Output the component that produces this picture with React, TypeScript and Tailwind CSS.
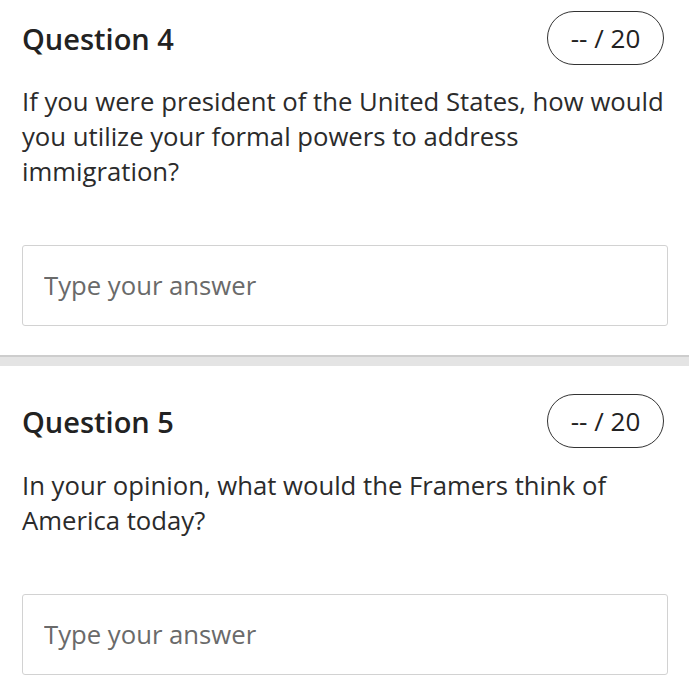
import React from 'react';

type Question = {
	id: number;
	prompt: string;
	points: number;
};

const questions: Question[] = [
	{
		id: 4,
		prompt:
			'If you were president of the United States, how would you utilize your formal powers to address immigration?',
		points: 20,
	},
	{
		id: 5,
		prompt: 'In your opinion, what would the Framers think of America today?',
		points: 20,
	},
];

function QuestionBlock({ q, first }: { q: Question; first: boolean }) {
	return (
		<section
			className={`px-[22px] ${first ? 'pt-[11px] pb-[29px]' : 'pt-[28px] pb-[26px]'}`}
		>
			<div className="flex items-center justify-between h-[54px]">
				<h2 className="text-[29px] font-semibold text-[#222] leading-none">
					Question {q.id}
				</h2>
				<div className="flex items-center justify-center h-[54px] w-[117px] mr-[4px] rounded-full border-[1.5px] border-[#333] text-[26px] text-[#222]">
					-- / {q.points}
				</div>
			</div>
			<p
				className={`${first ? 'mt-[19px]' : 'mt-[20px]'} text-[25.7px] leading-[35px] text-[#2b2b2b]`}
			>
				{q.prompt}
			</p>
			<input
				type="text"
				placeholder="Type your answer"
				className="mt-[56px] block w-full h-[81px] rounded-[3px] border-[1.5px] border-[#d2d2d2] px-[21px] text-[25.7px] text-[#333] placeholder:text-[#6a6a6a] outline-none"
			/>
		</section>
	);
}

export default function App() {
	return (
		<div className="w-[690px] min-h-[700px] bg-white font-['Open_Sans',sans-serif]">
			{questions.map((q, i) => (
				<React.Fragment key={q.id}>
					{i > 0 && (
						<div className="mr-[1px] h-[11px] border-t-2 border-[#cdcdcd] bg-[#e4e4e4]" />
					)}
					<QuestionBlock q={q} first={i === 0} />
				</React.Fragment>
			))}
		</div>
	);
}
